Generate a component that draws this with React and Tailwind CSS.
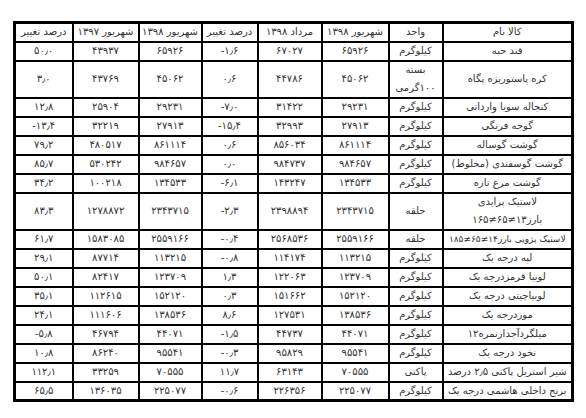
const headers = ["کالا نام", "واحد", "شهریور ۱۳۹۸", "مرداد ۱۳۹۸", "درصد تغییر", "شهریور ۱۳۹۸", "شهریور ۱۳۹۷", "درصد تغییر"];

const rows = [
  { name: "قند حبه", unit: "کیلوگرم", v: ["۶۵۹۲۶", "۶۷۰۲۷", "-۱٫۶", "۶۵۹۲۶", "۴۳۹۳۷", "۵۰٫۰"] },
  { name: "کره پاستوریزه پگاه", unit: ["بسته", "۱۰۰گرمی"], tall: true, v: ["۴۵۰۶۲", "۴۴۷۸۶", "۰٫۶", "۴۵۰۶۲", "۴۳۷۶۹", "۳٫۰"] },
  { name: "کنجاله سویا وارداتی", unit: "کیلوگرم", v: ["۲۹۲۳۱", "۳۱۴۲۲", "-۷٫۰", "۲۹۲۳۱", "۲۵۹۰۴", "۱۲٫۸"] },
  { name: "گوجه فرنگی", unit: "کیلوگرم", v: ["۲۷۹۱۳", "۳۲۹۹۳", "-۱۵٫۴", "۲۷۹۱۳", "۳۲۲۱۹", "-۱۳٫۴"] },
  { name: "گوشت گوساله", unit: "کیلوگرم", v: ["۸۶۱۱۱۴", "۸۵۶۰۳۴", "۰٫۶", "۸۶۱۱۱۴", "۴۸۰۵۱۷", "۷۹٫۲"] },
  { name: "گوشت گوسفندی (مخلوط)", unit: "کیلوگرم", v: ["۹۸۴۶۵۷", "۹۸۴۷۳۷", "۰٫۰", "۹۸۴۶۵۷", "۵۳۰۲۴۲", "۸۵٫۷"] },
  { name: "گوشت مرغ تازه", unit: "کیلوگرم", v: ["۱۳۴۵۳۳", "۱۴۳۲۴۷", "-۶٫۱", "۱۳۴۵۳۳", "۱۰۰۲۱۸", "۳۴٫۲"] },
  { name: ["لاستیک پرایدی", "بارز۱۳≠۶۵≠۱۶۵"], unit: "حلقه", tall: true, v: ["۲۳۴۳۷۱۵", "۲۳۹۸۸۹۴", "-۲٫۳", "۲۳۴۳۷۱۵", "۱۲۷۸۸۷۲", "۸۳٫۳"] },
  { name: "لاستیک پژویی بارز۱۴≠۶۵≠۱۸۵", unit: "حلقه", tight: true, v: ["۲۵۵۹۱۶۶", "۲۵۶۸۵۳۶", "-۰٫۴", "۲۵۵۹۱۶۶", "۱۵۸۳۰۸۵", "۶۱٫۷"] },
  { name: "لپه درجه یک", unit: "کیلوگرم", v: ["۱۱۳۲۱۵", "۱۱۴۱۷۴", "-۰٫۸", "۱۱۳۲۱۵", "۸۷۷۱۴", "۲۹٫۱"] },
  { name: "لوبیا قرمزدرجه یک", unit: "کیلوگرم", v: ["۱۲۳۷۰۹", "۱۲۲۰۶۳", "۱٫۳", "۱۲۳۷۰۹", "۸۲۴۱۷", "۵۰٫۱"] },
  { name: "لوبیاچیتی درجه یک", unit: "کیلوگرم", v: ["۱۵۲۱۲۰", "۱۵۱۶۶۲", "۰٫۳", "۱۵۲۱۲۰", "۱۱۲۶۱۵", "۳۵٫۱"] },
  { name: "موزدرجه یک", unit: "کیلوگرم", v: ["۱۳۸۵۳۶", "۱۲۷۵۳۱", "۸٫۶", "۱۳۸۵۳۶", "۱۱۱۶۰۶", "۲۴٫۱"] },
  { name: "میلگردآجدارنمره۱۲", unit: "کیلوگرم", v: ["۴۴۰۷۱", "۴۴۷۳۷", "-۱٫۵", "۴۴۰۷۱", "۴۶۷۹۴", "-۵٫۸"] },
  { name: "نخود درجه یک", unit: "کیلوگرم", v: ["۹۵۵۴۱", "۹۵۸۲۹", "-۰٫۳", "۹۵۵۴۱", "۸۶۲۴۰", "۱۰٫۸"] },
  { name: "شیر استریل پاکتی ۲٫۵ درصد", unit: "پاکتی", v: ["۷۰۵۵۵", "۶۳۱۴۳", "۱۱٫۷", "۷۰۵۵۵", "۳۳۲۵۹", "۱۱۲٫۱"] },
  { name: "برنج داخلی هاشمی درجه یک", unit: "کیلوگرم", v: ["۲۲۵۰۷۷", "۲۲۶۳۵۶", "-۰٫۶", "۲۲۵۰۷۷", "۱۳۶۰۳۵", "۶۵٫۵"] },
];

const widths = [130, 54, 67, 64, 56, 63, 66, 58];

function Lines({ value }) {
  if (Array.isArray(value)) {
    return value.map((line, i) => (
      <div key={i} className={i > 0 ? "mt-[6px]" : ""}>{line}</div>
    ));
  }
  return value;
}

export default function App() {
  return (
    <div className="w-[586px] h-[418px] bg-white pt-[21px] pl-[13px]">
      <table
        dir="rtl"
        className="table-fixed border-collapse border-[3px] border-black w-[559px] text-[10px] leading-[12px] text-[#333] font-['DejaVu_Sans',sans-serif]"
      >
        <colgroup>
          {widths.map((w, i) => (
            <col key={i} style={{ width: w }} />
          ))}
        </colgroup>
        <thead>
          <tr className="h-[19px]">
            {headers.map((h, i) => (
              <th key={i} className="border-2 border-black font-normal text-center p-0 whitespace-nowrap">
                {h}
              </th>
            ))}
          </tr>
        </thead>
        <tbody>
          {rows.map((r, i) => (
            <tr key={i} className={r.tall ? "h-[37px]" : "h-[19px]"}>
              <td className={`border-2 border-black text-center p-0 whitespace-nowrap overflow-hidden ${r.tight ? "tracking-[-0.4px] text-[9px]" : ""}`}>
                <Lines value={r.name} />
              </td>
              <td className="border-2 border-black text-center p-0 whitespace-nowrap">
                <Lines value={r.unit} />
              </td>
              {r.v.map((x, j) => (
                <td key={j} dir="ltr" className="border-2 border-black text-center p-0">
                  {x}
                </td>
              ))}
            </tr>
          ))}
        </tbody>
      </table>
    </div>
  );
}
